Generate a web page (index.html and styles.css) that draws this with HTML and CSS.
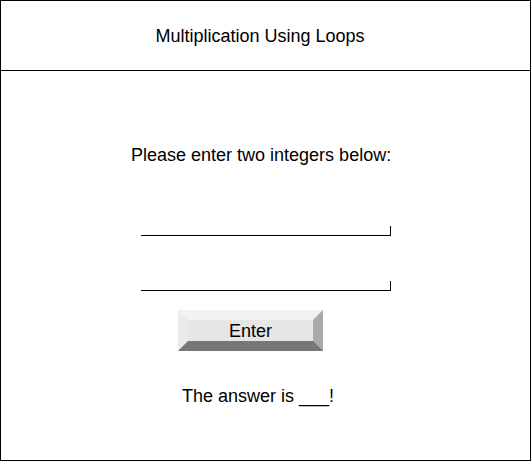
FILE: index.html
```html
<!DOCTYPE html>
<html>
<head>
<meta charset="utf-8">
<link rel="stylesheet" href="styles.css">
</head>
<body>
<div class="frame">
  <header class="header">Multiplication Using Loops</header>
  <main class="content">
    <p class="prompt">Please enter two integers below:</p>
    <div class="field field-first"></div>
    <div class="field field-second"></div>
    <div class="button">Enter</div>
    <p class="answer">The answer is ___!</p>
  </main>
</div>
</body>
</html>
```

FILE: styles.css
```css
html, body {
  margin: 0;
  padding: 0;
  background: #fff;
}
body {
  font-family: "Liberation Sans", Arial, sans-serif;
  color: #000;
}
.frame {
  box-sizing: border-box;
  width: 531px;
  height: 461px;
  border: 1px solid #000;
  display: flex;
  flex-direction: column;
}
.header {
  box-sizing: border-box;
  height: 70px;
  border-bottom: 1px solid #000;
  display: flex;
  align-items: center;
  justify-content: center;
  font-size: 18px;
  padding-top: 2px;
  padding-right: 11px;
}
.content {
  display: flex;
  flex-direction: column;
  align-items: flex-start;
}
.prompt {
  margin: 74px 0 0 130px;
  font-size: 18px;
  line-height: 20px;
}
.field {
  box-sizing: border-box;
  width: 250px;
  height: 10px;
  border-bottom: 1px solid #000;
  border-right: 1px solid #000;
  margin-left: 140px;
}
.field-first {
  margin-top: 61px;
}
.field-second {
  margin-top: 45px;
}
.button {
  box-sizing: border-box;
  margin: 19px 0 0 177px;
  width: 145px;
  height: 41px;
  border-style: solid;
  border-width: 10px;
  border-color: #f2f2f2 #a9a9a9 #777777 #ebebeb;
  background: #e6e6e6;
  font-size: 18px;
  line-height: 23px;
  text-align: center;
}
.answer {
  margin: 35px 0 0 181px;
  font-size: 18px;
  line-height: 20px;
}
```
